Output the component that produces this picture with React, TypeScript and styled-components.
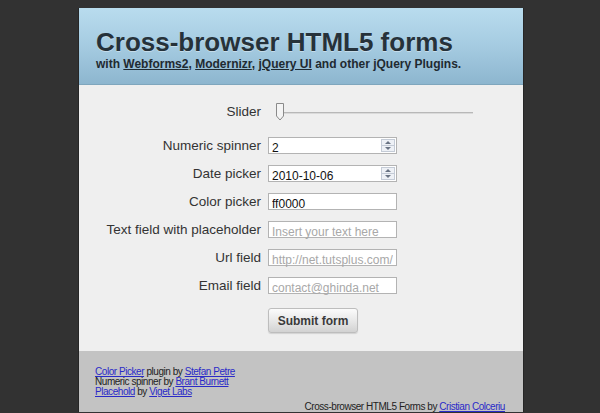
import styled, { createGlobalStyle } from 'styled-components';

const GlobalStyle = createGlobalStyle`
  html, body {
    margin: 0;
    padding: 0;
    background: #323232;
    height: 100%;
    overflow: hidden;
  }
  body {
    font-family: "Liberation Sans", Arial, sans-serif;
  }
`;

const Page = styled.div`
  width: 444px;
  margin: 8px 0 0 79px;
  box-shadow: -1px 0 0 #262626, 1px 0 0 #262626;
`;

const Header = styled.header`
  height: 77px;
  box-sizing: border-box;
  padding: 19px 0 0 17px;
  background: linear-gradient(to bottom, #b9dcee 0%, #a5cbe1 50%, #8db6cf 100%);
  border-bottom: 1px solid #7fa6bd;
`;

const Title = styled.h1`
  margin: 0;
  font-size: 26px;
  line-height: 30px;
  font-weight: bold;
  color: #26323a;
  text-shadow: 0 1px 0 rgba(255, 255, 255, 0.4);
`;

const Subtitle = styled.p`
  margin: 0;
  font-size: 12px;
  line-height: 15px;
  font-weight: bold;
  color: #1f2a31;

  a {
    color: #1f2a31;
    text-decoration: underline;
  }
`;

const Main = styled.main`
  background: #efefef;
  padding: 17px 0 18px;
`;

const Form = styled.form`
  display: grid;
  grid-template-columns: 182px 1fr;
  column-gap: 7px;
  row-gap: 11px;
  align-items: center;
`;

const Label = styled.label`
  text-align: right;
  font-size: 13.5px;
  color: #333;
  white-space: nowrap;
`;

const SliderLabel = styled(Label)`
  align-self: start;
  padding-top: 2px;
`;

const SliderTrack = styled.div`
  position: relative;
  width: 198px;
  height: 20px;
  margin: 0 0 4px 7px;

  &::before {
    content: '';
    position: absolute;
    left: 1px;
    right: 0;
    top: 10px;
    height: 1px;
    background: #b8b8b8;
    border-bottom: 1px solid #dadada;
  }
`;

const SliderThumb = styled.svg`
  position: absolute;
  left: 0;
  top: 1px;
`;

const Field = styled.div`
  position: relative;
  width: 129px;
  height: 17px;
  box-sizing: border-box;
  border: 1px solid #b3b3b3;
  background: #fff;
`;

const Input = styled.input`
  width: 100%;
  height: 100%;
  box-sizing: border-box;
  border: none;
  outline: none;
  background: transparent;
  padding: 0 3px;
  font-family: "Liberation Sans", Arial, sans-serif;
  font-size: 12px;
  color: #111;

  &::placeholder {
    color: #a8a8a8;
  }
`;

const Spin = styled.div`
  position: absolute;
  right: 1px;
  top: 1px;
  width: 14px;
  height: 13px;
  display: flex;
  flex-direction: column;
  border: 1px solid #c4cbd6;
  box-sizing: border-box;
  background: #eef1f6;
`;

const SpinHalf = styled.div<{ $down?: boolean }>`
  flex: 1;
  display: flex;
  align-items: center;
  justify-content: center;
  ${({ $down }) => ($down ? 'border-top: 1px solid #c4cbd6;' : '')}

  &::after {
    content: '';
    border-left: 3px solid transparent;
    border-right: 3px solid transparent;
    ${({ $down }) =>
      $down ? 'border-top: 3px solid #6a7484;' : 'border-bottom: 3px solid #6a7484;'}
  }
`;

const ButtonCell = styled.div`
  grid-column: 2;
  margin-top: 3px;
`;

const Button = styled.button`
  width: 90px;
  height: 25px;
  border: 1px solid #bdbdbd;
  border-radius: 3px;
  background: linear-gradient(to bottom, #fbfbfb 0%, #e6e6e6 55%, #d2d2d2 100%);
  box-shadow: 0 1px 1px rgba(0, 0, 0, 0.12);
  font-family: "Liberation Sans", Arial, sans-serif;
  font-size: 12px;
  font-weight: bold;
  color: #3a3a3a;
  cursor: pointer;
`;

const Footer = styled.footer`
  background: #c3c3c3;
  padding: 16px 18px 0 16px;
  font-size: 10px;
  line-height: 10px;
  color: #222;
  letter-spacing: -0.45px;

  a {
    color: #2a2ac8;
    text-decoration: underline;
  }
`;

const Credits = styled.p`
  margin: 0;
`;

const Signature = styled.p`
  margin: 5px 0 0;
  text-align: right;
`;

function Spinner() {
  return (
    <Spin>
      <SpinHalf />
      <SpinHalf $down />
    </Spin>
  );
}

export default function App() {
  return (
    <>
      <GlobalStyle />
      <Page>
        <Header>
          <Title>Cross-browser HTML5 forms</Title>
          <Subtitle>
            with <a href="#">Webforms2</a>, <a href="#">Modernizr</a>, <a href="#">jQuery UI</a> and
            other jQuery Plugins.
          </Subtitle>
        </Header>

        <Main>
          <Form onSubmit={(e) => e.preventDefault()}>
            <SliderLabel>Slider</SliderLabel>
            <SliderTrack>
              <SliderThumb width="10" height="18" viewBox="0 0 10 18">
                <path
                  d="M1.5 0.5 H8.5 V13 L5 17 L1.5 13 Z"
                  fill="#f4f4f4"
                  stroke="#8a8a8a"
                  strokeWidth="1"
                />
              </SliderThumb>
            </SliderTrack>

            <Label>Numeric spinner</Label>
            <Field>
              <Input defaultValue="2" />
              <Spinner />
            </Field>

            <Label>Date picker</Label>
            <Field>
              <Input defaultValue="2010-10-06" />
              <Spinner />
            </Field>

            <Label>Color picker</Label>
            <Field>
              <Input defaultValue="ff0000" />
            </Field>

            <Label>Text field with placeholder</Label>
            <Field>
              <Input placeholder="Insert your text here" />
            </Field>

            <Label>Url field</Label>
            <Field>
              <Input placeholder="http://net.tutsplus.com/" />
            </Field>

            <Label>Email field</Label>
            <Field>
              <Input placeholder="contact@ghinda.net" />
            </Field>

            <ButtonCell>
              <Button type="submit">Submit form</Button>
            </ButtonCell>
          </Form>
        </Main>

        <Footer>
          <Credits>
            <a href="#">Color Picker</a> plugin by <a href="#">Stefan Petre</a>
            <br />
            Numeric spinner by <a href="#">Brant Burnett</a>
            <br />
            <a href="#">Placehold</a> by <a href="#">Viget Labs</a>
          </Credits>
          <Signature>
            Cross-browser HTML5 Forms by <a href="#">Cristian Colceriu</a>
          </Signature>
        </Footer>
      </Page>
    </>
  );
}
